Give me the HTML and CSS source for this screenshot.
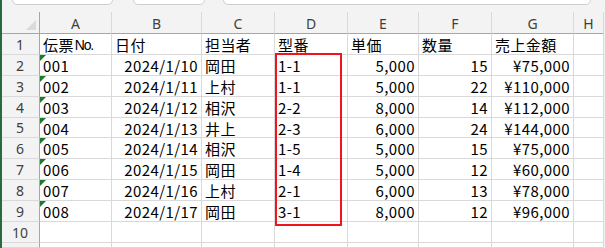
FILE: index.html
```html
<!DOCTYPE html>
<html lang="ja">
<head>
<meta charset="utf-8">
<title>Sheet</title>
<link rel="stylesheet" href="styles.css">
</head>
<body>
<div class="app">
  <div class="edge"></div>
  <div class="main">
    <div class="toolbar">
      <div class="box box-name"></div>
      <div class="box box-fx"></div>
      <div class="box box-formula"></div>
    </div>
    <div class="sheet">
      <div class="corner"><span class="tri"></span></div>
      <div class="ch">A</div><div class="ch">B</div><div class="ch">C</div><div class="ch">D</div><div class="ch">E</div><div class="ch">F</div><div class="ch">G</div><div class="ch">H</div>

      <div class="rh">1</div>
      <div class="c">伝票<span class="no">No.</span></div><div class="c">日付</div><div class="c">担当者</div><div class="c">型番</div><div class="c">単価</div><div class="c">数量</div><div class="c">売上金額</div><div class="c"></div>

      <div class="rh">2</div>
      <div class="c t">001</div><div class="c r">2024/1/10</div><div class="c">岡田</div><div class="c">1-1</div><div class="c r">5,000</div><div class="c r">15</div><div class="c r">¥75,000</div><div class="c"></div>

      <div class="rh">3</div>
      <div class="c t">002</div><div class="c r">2024/1/11</div><div class="c">上村</div><div class="c">1-1</div><div class="c r">5,000</div><div class="c r">22</div><div class="c r">¥110,000</div><div class="c"></div>

      <div class="rh">4</div>
      <div class="c t">003</div><div class="c r">2024/1/12</div><div class="c">相沢</div><div class="c">2-2</div><div class="c r">8,000</div><div class="c r">14</div><div class="c r">¥112,000</div><div class="c"></div>

      <div class="rh">5</div>
      <div class="c t">004</div><div class="c r">2024/1/13</div><div class="c">井上</div><div class="c">2-3</div><div class="c r">6,000</div><div class="c r">24</div><div class="c r">¥144,000</div><div class="c"></div>

      <div class="rh">6</div>
      <div class="c t">005</div><div class="c r">2024/1/14</div><div class="c">相沢</div><div class="c">1-5</div><div class="c r">5,000</div><div class="c r">15</div><div class="c r">¥75,000</div><div class="c"></div>

      <div class="rh">7</div>
      <div class="c t">006</div><div class="c r">2024/1/15</div><div class="c">岡田</div><div class="c">1-4</div><div class="c r">5,000</div><div class="c r">12</div><div class="c r">¥60,000</div><div class="c"></div>

      <div class="rh">8</div>
      <div class="c t">007</div><div class="c r">2024/1/16</div><div class="c">上村</div><div class="c">2-1</div><div class="c r">6,000</div><div class="c r">13</div><div class="c r">¥78,000</div><div class="c"></div>

      <div class="rh">9</div>
      <div class="c t">008</div><div class="c r">2024/1/17</div><div class="c">岡田</div><div class="c">3-1</div><div class="c r">8,000</div><div class="c r">12</div><div class="c r">¥96,000</div><div class="c"></div>

      <div class="rh">10</div>
      <div class="c"></div><div class="c"></div><div class="c"></div><div class="c"></div><div class="c"></div><div class="c"></div><div class="c"></div><div class="c"></div>

      <div class="rh"></div>
      <div class="c"></div><div class="c"></div><div class="c"></div><div class="c"></div><div class="c"></div><div class="c"></div><div class="c"></div><div class="c"></div>
    </div>
    <div class="mark"></div>
  </div>
</div>
</body>
</html>
```

FILE: styles.css
```css
* { box-sizing: border-box; }
html, body { margin: 0; padding: 0; }
body {
  width: 605px;
  height: 248px;
  overflow: hidden;
  background: #ffffff;
  font-family: "Noto Sans CJK JP", "Noto Sans", sans-serif;
}
.app {
  display: flex;
  height: 248px;
  overflow: hidden;
}
.edge {
  width: 2px;
  flex: none;
  background: #2b6a41;
}
.main {
  position: relative;
  flex: 1;
  background: #f3f3f3;
  overflow: hidden;
}
.toolbar {
  height: 12px;
  display: flex;
  align-items: flex-start;
  overflow: hidden;
}
.box {
  height: 16px;
  margin-top: -11px;
  background: #ffffff;
  border: 1px solid #cfcfcf;
  border-radius: 5px;
}
.box-name { margin-left: 10px; width: 101px; }
.box-fx { margin-left: 20px; width: 72px; }
.box-formula { margin-left: 18px; width: 368px; }

.sheet {
  display: grid;
  grid-template-columns: 38px 72px 90px 73px 73px 71px 73px 82px 30px;
  grid-template-rows: 22px 21px 21px 21px 21px 20px 21px 21px 21px 21px 21px 5px;
  overflow: hidden;
}
.corner {
  position: relative;
  background: #f3f3f3;
  border-right: 1px solid #a6a6a6;
  border-bottom: 1px solid #a6a6a6;
}
.tri {
  position: absolute;
  right: 3px;
  bottom: 3px;
  width: 0;
  height: 0;
  border-left: 10px solid transparent;
  border-bottom: 10px solid #dadada;
}
.ch {
  background: #f3f3f3;
  border-right: 1px solid #d9d9d9;
  border-bottom: 1px solid #a6a6a6;
  display: flex;
  align-items: center;
  justify-content: center;
  font-family: "Noto Sans", "Open Sans", sans-serif;
  font-size: 14px;
  color: #3f3f3f;
  padding-top: 1px;
}
.rh {
  background: #f3f3f3;
  border-right: 1px solid #a6a6a6;
  border-bottom: 1px solid #d9d9d9;
  display: flex;
  align-items: center;
  justify-content: center;
  font-family: "Noto Sans", "Open Sans", sans-serif;
  font-size: 14px;
  color: #3f3f3f;
  padding-right: 1px;
  overflow: hidden;
}
.c {
  position: relative;
  background: #ffffff;
  border-right: 1px solid #d9d9d9;
  border-bottom: 1px solid #d9d9d9;
  display: flex;
  align-items: center;
  padding: 1px 3px 0 3px;
  font-size: 15px;
  color: #000000;
  white-space: nowrap;
  letter-spacing: 0.4px;
  overflow: hidden;
}
.no {
  font-family: "Liberation Sans Narrow", "Liberation Sans", sans-serif;
  font-size: 14px;
  letter-spacing: -1.2px;
  padding-left: 1px;
}
.c.r {
  justify-content: flex-end;
  padding-right: 3px;
}
.c.t::before {
  content: "";
  position: absolute;
  left: 0;
  top: 0;
  width: 0;
  height: 0;
  border-top: 6px solid #1b7a2c;
  border-right: 6px solid transparent;
}
.mark {
  position: absolute;
  left: 273px;
  top: 53px;
  width: 67px;
  height: 173px;
  border: 2px solid #f0141e;
}
```
